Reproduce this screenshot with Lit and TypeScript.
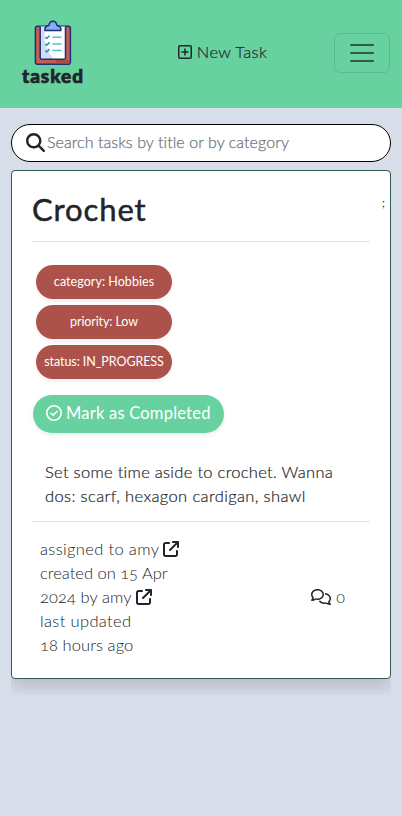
import { LitElement, html, css, svg } from "lit";
import { customElement, property } from "lit/decorators.js";

const icons: Record<string, { box: string; shape: unknown }> = {
  search: {
    box: "0 0 512 512",
    shape: svg`<path d="M416 208c0 45.9-14.9 88.3-40 122.7L502.6 457.4c12.5 12.5 12.5 32.8 0 45.3s-32.8 12.5-45.3 0L330.7 376c-34.4 25.2-76.8 40-122.7 40C93.1 416 0 322.9 0 208S93.1 0 208 0S416 93.1 416 208zM208 352a144 144 0 1 0 0-288 144 144 0 1 0 0 288z"/>`,
  },
  external: {
    box: "0 0 512 512",
    shape: svg`<path d="M320 0c-17.7 0-32 14.3-32 32s14.3 32 32 32h82.7L201.4 265.4c-12.5 12.5-12.5 32.8 0 45.3s32.8 12.5 45.3 0L448 109.3V192c0 17.7 14.3 32 32 32s32-14.3 32-32V32c0-17.7-14.3-32-32-32H320zM80 32C35.8 32 0 67.8 0 112V432c0 44.2 35.8 80 80 80H400c44.2 0 80-35.8 80-80V320c0-17.7-14.3-32-32-32s-32 14.3-32 32V432c0 8.8-7.2 16-16 16H80c-8.8 0-16-7.2-16-16V112c0-8.8 7.2-16 16-16H192c17.7 0 32-14.3 32-32s-14.3-32-32-32H80z"/>`,
  },
  comments: {
    box: "0 0 640 512",
    shape: svg`<path d="M88.2 309.1c9.8-18.3 6.8-40.8-7.5-55.8C59.4 230.9 48 204 48 176c0-63.5 63.8-128 160-128s160 64.5 160 128s-63.8 128-160 128c-13.1 0-25.8-1.3-37.8-3.6c-10.4-2-21.2-.6-30.7 4.2c-4.1 2.1-8.3 4.1-12.6 6c-16 7.2-32.9 13.5-49.9 18c2.8-4.6 5.4-9.1 7.9-13.6c1.1-1.9 2.2-3.9 3.2-5.9zM208 352c114.9 0 208-78.8 208-176S322.9 0 208 0S0 78.8 0 176c0 41.8 17.2 80.1 45.9 110.3c-.9 1.7-1.9 3.5-2.8 5.1c-10.3 18.4-22.3 36.5-36.6 52.1c-6.6 7-8.3 17.2-4.6 25.9C5.8 378.3 14.4 384 24 384c43 0 86.5-13.3 122.7-29.7c4.8-2.2 9.6-4.5 14.2-6.8c15.1 3 30.9 4.5 47.1 4.5zM432 480c16.2 0 31.9-1.6 47.1-4.5c4.6 2.3 9.4 4.6 14.2 6.8C529.5 498.7 573 512 616 512c9.6 0 18.2-5.7 22-14.5c3.8-8.8 2-19-4.6-25.9c-14.2-15.6-26.2-33.7-36.6-52.1c-.9-1.7-1.9-3.4-2.8-5.1C622.8 384.1 640 345.8 640 304c0-94.4-87.9-171.5-198.2-175.8c4.1 15.2 6.2 31.2 6.2 47.8l0 .6c87.2 6.7 144 67.5 144 127.4c0 28-11.4 54.9-32.7 77.2c-14.3 15-17.3 37.6-7.5 55.8c1.1 2 2.2 4 3.2 5.9c2.5 4.5 5.2 9 7.9 13.6c-17-4.5-33.9-10.7-49.9-18c-4.3-1.9-8.5-3.9-12.6-6c-9.5-4.8-20.3-6.2-30.7-4.2c-12.1 2.4-24.8 3.6-37.8 3.6c-61.7 0-110-26.5-136.8-62.3c-16 5.4-32.8 9.4-50 11.8C279 439.8 350 480 432 480z"/>`,
  },
  plus: {
    box: "0 0 14 14",
    shape: svg`<rect x=".75" y=".75" width="12.5" height="12.5" rx="1.3" fill="none" stroke="currentColor" stroke-width="1.5"/><path d="M7 4v6M4 7h6" fill="none" stroke="currentColor" stroke-width="1.5" stroke-linecap="round"/>`,
  },
  check: {
    box: "0 0 16 16",
    shape: svg`<circle cx="8" cy="8" r="7.2" fill="none" stroke="currentColor" stroke-width="1.6"/><path d="M5.1 8.3l2 2 3.9-4" fill="none" stroke="currentColor" stroke-width="1.6" stroke-linecap="round" stroke-linejoin="round"/>`,
  },
  menu: {
    box: "0 0 30 30",
    shape: svg`<path d="M4 7h22M4 15h22M4 23h22" fill="none" stroke="currentColor" stroke-width="2" stroke-linecap="round"/>`,
  },
  clipboard: {
    box: "0 0 38 46",
    shape: svg`
      <rect x="1.4" y="6.2" width="35" height="38" rx="2" fill="#c75c52" stroke="#173474" stroke-width="1.5"/>
      <path d="M21 40h14.700v3.600h-11z" fill="#a84c45"/>
      <path d="M6.200 6.500h25.300v33H6.200z" fill="#fff"/>
      <path d="M7 7h5c-2 8-2 15 1 21 2 5 4 8 7 11H7z" fill="#d3dafa"/>
      <path d="M6.200 6.500v31.300q0 1.500 1.500 1.500h22.300q1.500 0 1.500-1.500V6.500" fill="none" stroke="#173474" stroke-width="1.500"/>
      <path d="M10.900 10.400q-.4-4.500 4-5c.8-5.700 7.200-5.700 8 0q4.400.5 4 5z" fill="#8fa9f3" stroke="#173474" stroke-width="1.500" stroke-linejoin="round"/>
      <g fill="none" stroke="#2799b5" stroke-width="1.600">
        <path d="M11.300 17.200l1.400 1.300 2.800-2.800M11.300 23.900l1.400 1.300 2.800-2.800M11.300 30.600l1.400 1.300 2.800-2.800"/>
      </g>
      <path d="M19 17.200h8M19 23.900h8M19 30.600h8" fill="none" stroke="#51c3c8" stroke-width="1.500" stroke-linecap="round"/>`,
  },
};

@customElement("ui-icon")
class UiIcon extends LitElement {
  @property() name = "search";

  static styles = css`
    :host { display: inline-block; flex: none; width: 16px; height: 16px; letter-spacing: 0; }
    .glyph { display: block; width: 100%; height: 100%; fill: currentColor; overflow: visible; }
  `;

  render() {
    const icon = icons[this.name];
    return html`<svg class="glyph" viewBox=${icon.box} aria-hidden="true">${icon.shape}</svg>`;
  }
}

@customElement("task-card")
class TaskCard extends LitElement {
  static styles = css`
    :host { display: block; overflow: hidden; padding-bottom: 16px; }
    .card {
      box-sizing: border-box; height: 509px; display: flex; flex-direction: column;
      background: #fff; border: 1px solid #2f5d50; border-radius: 4px;
      box-shadow: 0 8px 16px rgba(0, 0, 0, .15); padding: 18px 20px 0;
    }
    .head { display: flex; justify-content: space-between; height: 52px; border-bottom: 1px solid #dfe0e0; }
    .title { margin: 0; font-size: 31px; line-height: 40px; font-weight: 400; letter-spacing: .9px; -webkit-text-stroke: .5px #212529; }
    .mark { font-size: 11px; line-height: 28px; margin-right: -15px; color: #212529; }
    .tags { display: flex; flex-direction: column; gap: 6px; margin: 23px 0 0 4px; }
    .tag {
      width: 136px; height: 34px; border-radius: 17px; background: #ac524b; color: #fff;
      display: flex; align-items: center; justify-content: center;
      font-size: 12.5px; font-weight: 400; box-shadow: 0 2px 4px rgba(0, 0, 0, .075);
    }
    .t1 { letter-spacing: .05px; }
    .t2 { letter-spacing: -.1px; }
    .t3 { letter-spacing: -.08px; }
    .complete {
      margin: 16px 0 0 1px; width: 191px; height: 38px; border: 0; border-radius: 19px; padding: 0 0 2px 13px;
      display: flex; align-items: center; gap: 4px; background: #67d29f; color: #fff;
      font: 400 16.5px/24px Lato, sans-serif; letter-spacing: .22px; box-shadow: 0 2px 4px rgba(0, 0, 0, .075);
    }
    .text { margin: 27px 0 0; padding: 0 13px 13px; font-size: 16.5px; line-height: 24px; font-weight: 300; -webkit-text-stroke: .2px #212529; white-space: nowrap; }
    .p1 { letter-spacing: .29px; }
    .p2 { letter-spacing: .37px; }
    .foot { border-top: 1px solid #dfe0e0; display: flex; align-items: center; justify-content: space-between; padding: 15px 25px 0 8px; }
    .meta { font-weight: 300; font-size: 16.5px; line-height: 24px; font-variant-numeric: oldstyle-nums; }
    .line { display: flex; align-items: center; gap: 4px; height: 24px; white-space: nowrap; }
    .m1 { letter-spacing: .35px; }
    .m2 { letter-spacing: 0; }
    .m3 { letter-spacing: .07px; }
    .m4 { letter-spacing: .35px; }
    .m5 { letter-spacing: .08px; }
    .comments { display: flex; align-items: center; gap: 5px; font-weight: 300; font-variant-numeric: oldstyle-nums; }
    .bubbles { width: 20px; }
  `;

  render() {
    return html`
      <article class="card">
        <header class="head"><h2 class="title">Crochet</h2><span class="mark">;</span></header>
        <div class="tags">
          <span class="tag t1">category: Hobbies</span>
          <span class="tag t2">priority: Low</span>
          <span class="tag t3">status: IN_PROGRESS</span>
        </div>
        <button class="complete"><ui-icon name="check"></ui-icon>Mark as Completed</button>
        <p class="text"><span class="p1">Set some time aside to crochet. Wanna</span><br /><span class="p2">dos: scarf, hexagon cardigan, shawl</span></p>
        <footer class="foot">
          <div class="meta">
            <div class="line m1">assigned to amy <ui-icon name="external"></ui-icon></div>
            <div class="line m2">created on 15 Apr</div>
            <div class="line m3">2024 by amy <ui-icon name="external"></ui-icon></div>
            <div class="line m4">last updated</div>
            <div class="line m5">18 hours ago</div>
          </div>
          <div class="comments"><ui-icon class="bubbles" name="comments"></ui-icon>0</div>
        </footer>
      </article>
    `;
  }
}

@customElement("app-root")
class AppRoot extends LitElement {
  static styles = css`
    :host { display: block; min-height: 816px; background: #d7dde9; color: #212529; font: 400 16px/24px Lato, sans-serif; }
    .bar { box-sizing: border-box; height: 108px; padding: 0 12px 0 21px; background: #67d29f; display: flex; align-items: center; justify-content: space-between; }
    .brand { width: 64px; height: 68px; display: flex; flex-direction: column; align-items: center; }
    .logo { width: 38px; height: 46px; }
    .word { font-size: 19px; line-height: 20px; font-weight: 900; letter-spacing: .95px; -webkit-text-stroke: .7px #212529; }
    .new { display: flex; align-items: center; gap: 5px; font-size: 16.5px; font-weight: 300; -webkit-text-stroke: .2px #212529; letter-spacing: .35px; margin-left: 26px; margin-top: -4px; }
    .plus { width: 14px; height: 14px; }
    .toggle { box-sizing: border-box; width: 56px; height: 40px; margin-top: -2px; padding: 0; display: grid; place-items: center; background: none; border: 1px solid rgba(33, 37, 41, .14); border-radius: 6px; color: rgba(33, 37, 41, .7); }
    .lines { width: 30px; height: 30px; }
    .page { padding: 16px 11px 0; display: grid; gap: 8px; }
    .search { box-sizing: border-box; height: 38px; border: 1px solid #000; border-radius: 19px; background: #fff; padding: 0 14px 2px; display: flex; align-items: center; gap: 2px; }
    .lens { width: 19px; height: 19px; }
    .hint { color: #6c757d; font-weight: 300; -webkit-text-stroke: .25px #6c757d; letter-spacing: .07px; white-space: nowrap; }
  `;

  render() {
    return html`
      <nav class="bar">
        <div class="brand"><ui-icon class="logo" name="clipboard"></ui-icon><span class="word">tasked</span></div>
        <div class="new"><ui-icon class="plus" name="plus"></ui-icon><span>New Task</span></div>
        <button class="toggle" aria-label="Menu"><ui-icon class="lines" name="menu"></ui-icon></button>
      </nav>
      <main class="page">
        <div class="search"><ui-icon class="lens" name="search"></ui-icon><span class="hint">Search tasks by title or by category</span></div>
        <task-card></task-card>
      </main>
    `;
  }
}
